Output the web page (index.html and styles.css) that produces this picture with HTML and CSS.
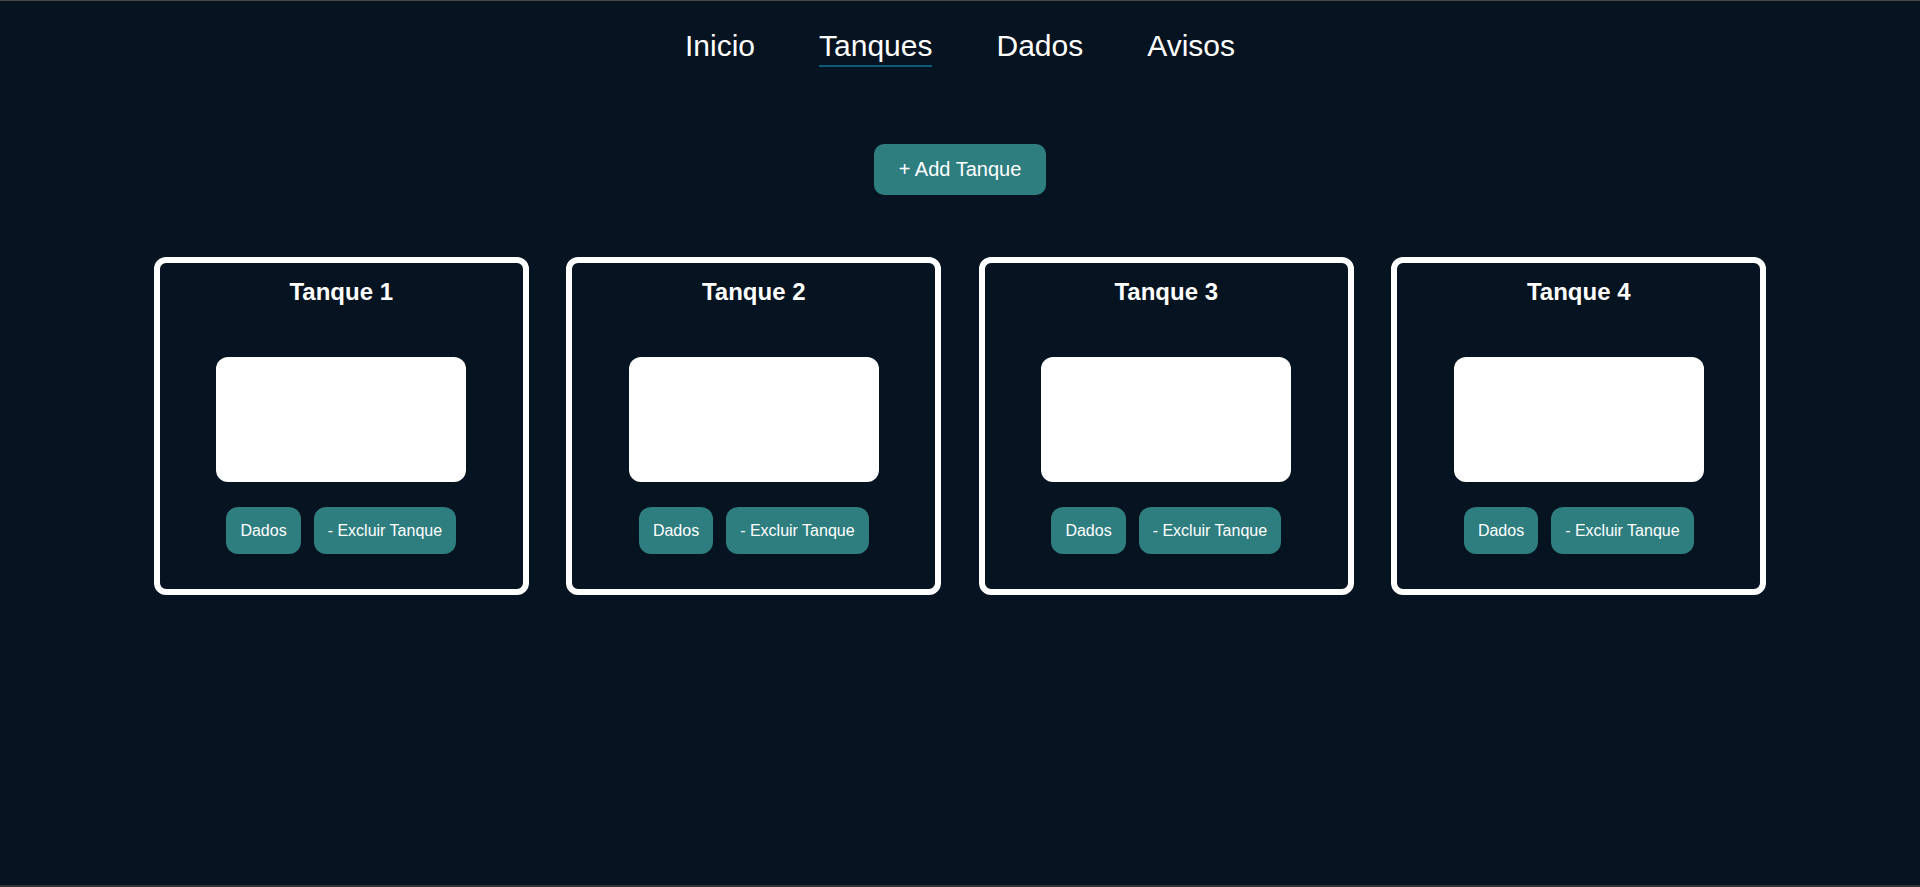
FILE: index.html
```html
<!DOCTYPE html>
<html lang="pt-BR">
<head>
<meta charset="utf-8">
<title>Tanques</title>
<link rel="stylesheet" href="styles.css">
</head>
<body>
<div class="page">
  <nav class="nav">
    <a class="nav-link" href="#">Inicio</a>
    <a class="nav-link active" href="#">Tanques</a>
    <a class="nav-link" href="#">Dados</a>
    <a class="nav-link" href="#">Avisos</a>
  </nav>
  <div class="actions">
    <button class="btn btn-add">+ Add Tanque</button>
  </div>
  <main class="tanks">
    <section class="card">
      <h2 class="card-title">Tanque 1</h2>
      <div class="tank-box"></div>
      <div class="card-buttons">
        <button class="btn btn-small">Dados</button>
        <button class="btn btn-small">- Excluir Tanque</button>
      </div>
    </section>
    <section class="card">
      <h2 class="card-title">Tanque 2</h2>
      <div class="tank-box"></div>
      <div class="card-buttons">
        <button class="btn btn-small">Dados</button>
        <button class="btn btn-small">- Excluir Tanque</button>
      </div>
    </section>
    <section class="card">
      <h2 class="card-title">Tanque 3</h2>
      <div class="tank-box"></div>
      <div class="card-buttons">
        <button class="btn btn-small">Dados</button>
        <button class="btn btn-small">- Excluir Tanque</button>
      </div>
    </section>
    <section class="card">
      <h2 class="card-title">Tanque 4</h2>
      <div class="tank-box"></div>
      <div class="card-buttons">
        <button class="btn btn-small">Dados</button>
        <button class="btn btn-small">- Excluir Tanque</button>
      </div>
    </section>
  </main>
</div>
</body>
</html>
```
FILE: styles.css
```css
* { box-sizing: border-box; }

html, body {
  margin: 0;
  padding: 0;
  background: #061320;
}

body {
  font-family: "Liberation Sans", Arial, sans-serif;
  color: #ffffff;
}

.page {
  height: 887px;
  border-top: 1px solid #4a4a4a;
  border-bottom: 2px solid #343434;
  overflow: hidden;
}

.nav {
  display: flex;
  justify-content: center;
  align-items: flex-start;
  gap: 64px;
  padding-top: 28px;
}

.nav-link {
  font-size: 30px;
  color: #ffffff;
  text-decoration: none;
  padding-bottom: 2px;
  border-bottom: 2px solid transparent;
}

.nav-link.active {
  border-bottom-color: #0c5a78;
}

.actions {
  display: flex;
  justify-content: center;
  margin-top: 77px;
}

.btn {
  font-family: "Liberation Sans", Arial, sans-serif;
  background: #2e7d7f;
  color: #ffffff;
  border: none;
  cursor: pointer;
}

.btn-add {
  font-size: 20px;
  padding: 14px 25px;
  border-radius: 10px;
  line-height: 23px;
}

.tanks {
  display: flex;
  justify-content: center;
  gap: 37.5px;
  margin-top: 62px;
}

.card {
  width: 375px;
  border: 6px solid #ffffff;
  border-radius: 12px;
  padding: 15px 0 35px;
  display: flex;
  flex-direction: column;
  align-items: center;
}

.card-title {
  margin: 0;
  font-size: 24px;
  font-weight: bold;
  line-height: 28px;
}

.tank-box {
  width: 250px;
  height: 125px;
  background: #ffffff;
  border-radius: 12px;
  margin-top: 51px;
}

.card-buttons {
  display: flex;
  gap: 13px;
  margin-top: 25px;
}

.btn-small {
  font-size: 16px;
  font-weight: 300;
  line-height: 19px;
  padding: 14px;
  border-radius: 12px;
}
```
